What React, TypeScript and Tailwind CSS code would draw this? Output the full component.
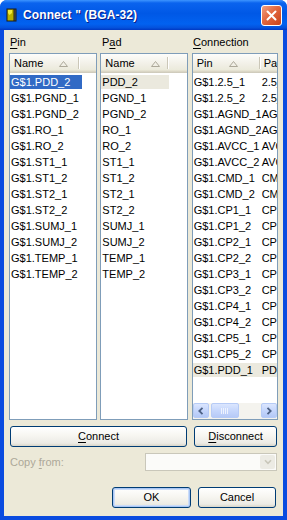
import React from 'react';

const pins = [
  'G$1.PDD_2', 'G$1.PGND_1', 'G$1.PGND_2', 'G$1.RO_1', 'G$1.RO_2', 'G$1.ST1_1', 'G$1.ST1_2',
  'G$1.ST2_1', 'G$1.ST2_2', 'G$1.SUMJ_1', 'G$1.SUMJ_2', 'G$1.TEMP_1', 'G$1.TEMP_2',
];

const pads = [
  'PDD_2', 'PGND_1', 'PGND_2', 'RO_1', 'RO_2', 'ST1_1', 'ST1_2',
  'ST2_1', 'ST2_2', 'SUMJ_1', 'SUMJ_2', 'TEMP_1', 'TEMP_2',
];

const connections: [string, string][] = [
  ['G$1.2.5_1', '2.5_1'], ['G$1.2.5_2', '2.5_2'], ['G$1.AGND_1', 'AGND_1'], ['G$1.AGND_2', 'AGND_2'],
  ['G$1.AVCC_1', 'AVCC_1'], ['G$1.AVCC_2', 'AVCC_2'], ['G$1.CMD_1', 'CMD_1'], ['G$1.CMD_2', 'CMD_2'],
  ['G$1.CP1_1', 'CP1_1'], ['G$1.CP1_2', 'CP1_2'], ['G$1.CP2_1', 'CP2_1'], ['G$1.CP2_2', 'CP2_2'],
  ['G$1.CP3_1', 'CP3_1'], ['G$1.CP3_2', 'CP3_2'], ['G$1.CP4_1', 'CP4_1'], ['G$1.CP4_2', 'CP4_2'],
  ['G$1.CP5_1', 'CP5_1'], ['G$1.CP5_2', 'CP5_2'], ['G$1.PDD_1', 'PDD_1'],
];

function SortArrow() {
  return (
    <svg width="9" height="6" viewBox="0 0 9 6" className="shrink-0">
      <path d="M0.5 5.5 L4.5 0.5 L8.5 5.5 Z" fill="none" stroke="#aca899" strokeWidth="1" />
    </svg>
  );
}

function HeaderCell({ label, width, arrow }: { label: string; width: number; arrow?: boolean }) {
  return (
    <div className="relative flex h-full shrink-0 items-center pl-[4px]" style={{ width }}>
      <span>{label}</span>
      {arrow && (
        <span className="ml-[16px]">
          <SortArrow />
        </span>
      )}
      <div className="absolute right-0 top-[3px] bottom-[4px] w-[2px] border-l border-[#cbc7b8] bg-white" />
    </div>
  );
}

function ListHeader({ children }: { children: React.ReactNode }) {
  return (
    <div className="flex h-[19px] shrink-0 overflow-hidden bg-[linear-gradient(180deg,#fdfdfb_0%,#f0eee4_60%,#ebeadb_84%,#e2decd_88%,#d6d2c2_94%,#cbc7b8_100%)]">
      {children}
    </div>
  );
}

function Mnemonic({ text, index }: { text: string; index: number }) {
  return (
    <>
      {text.slice(0, index)}
      <span className="underline underline-offset-[2px]">{text[index]}</span>
      {text.slice(index + 1)}
    </>
  );
}

function XpButton({ children, width, isDefault }: { children: React.ReactNode; width: number; isDefault?: boolean }) {
  return (
    <div
      className={
        'flex h-[21px] items-center justify-center rounded-[3px] border border-[#003c74] bg-[linear-gradient(180deg,#ffffff_0%,#f7f6f1_45%,#ecebe5_85%,#d8d5c8_100%)] text-black ' +
        (isDefault ? 'shadow-[inset_0_0_0_1px_#a9c6f4,inset_0_0_0_2px_#cbdcf9]' : '')
      }
      style={{ width }}
    >
      {children}
    </div>
  );
}

function ScrollArrow({ dir }: { dir: 'left' | 'right' }) {
  return (
    <div className="flex h-[15px] w-[16px] items-center justify-center rounded-[2px] border border-[#b6cbf6] bg-[linear-gradient(180deg,#dbe6fe_0%,#c5d6fc_50%,#b3c8f6_100%)]">
      <svg width="6" height="8" viewBox="0 0 6 8">
        {dir === 'left' ? (
          <path d="M4.5 0.8 L1.3 4 L4.5 7.2" fill="none" stroke="#4d6185" strokeWidth="1.8" />
        ) : (
          <path d="M1.5 0.8 L4.7 4 L1.5 7.2" fill="none" stroke="#4d6185" strokeWidth="1.8" />
        )}
      </svg>
    </div>
  );
}

export default function App() {
  return (
    <div className="flex h-[520px] w-[287px] flex-col overflow-hidden rounded-t-[7px] bg-[#0a4be0] font-['Liberation_Sans',Arial,sans-serif] text-[11px] text-black">
      {/* Title bar */}
      <div className="flex h-[30px] shrink-0 items-center bg-[linear-gradient(180deg,#3d95ff_0%,#0a63ee_10%,#0058e6_45%,#0262f0_80%,#0452dd_92%,#0038c2_100%)] pl-[6px] pr-[5px]">
        <svg width="11" height="14" viewBox="0 0 11 14" className="shrink-0">
          <rect x="0.5" y="0.5" width="10" height="13" fill="#1a1a1a" />
          <rect x="1.5" y="1.5" width="6" height="11" fill="#b9b200" />
          <path d="M2 2 L6 2 L6 5 L3.5 7 L2 5 Z" fill="#f0ea3c" />
          <rect x="8" y="1.5" width="2" height="11" fill="#3a3a3a" />
        </svg>
        <span className="ml-[6px] text-[12px] font-bold tracking-[0.1px] text-white [text-shadow:1px_1px_0_#0a1c86]">
          Connect " (BGA-32)
        </span>
        <div className="ml-auto flex h-[21px] w-[21px] items-center justify-center rounded-[3px] border border-white bg-[linear-gradient(135deg,#f0a081_0%,#e2673f_45%,#c8421a_100%)]">
          <svg width="11" height="11" viewBox="0 0 11 11">
            <path d="M1.5 1.5 L9.5 9.5 M9.5 1.5 L1.5 9.5" stroke="white" strokeWidth="2" strokeLinecap="round" />
          </svg>
        </div>
      </div>

      {/* Client area */}
      <div className="mx-[4px] mb-[4px] flex flex-1 flex-col bg-[#ece9d8] px-[5px] pt-[6px]">
        <div className="flex h-[13px] items-center">
          <div className="w-[92px] pl-[1px]"><Mnemonic text="Pin" index={0} /></div>
          <div className="w-[92px] pl-[1px]"><Mnemonic text="Pad" index={1} /></div>
          <div><Mnemonic text="Connection" index={0} /></div>
        </div>

        <div className="mt-[4px] flex h-[367px]">
          {/* Pin list */}
          <div className="flex w-[89px] flex-col overflow-hidden border border-[#7f9db9] bg-white">
            <ListHeader>
              <HeaderCell label="Name" width={70} arrow />
            </ListHeader>
            <div className="flex flex-col pt-[1px]">
              {pins.map((p, i) => (
                <div key={p} className="flex h-[16px] items-center">
                  <div
                    className={
                      'flex h-[14px] w-[72px] items-center whitespace-nowrap pl-[1px] ' +
                      (i === 0 ? 'bg-[#316ac5] text-white' : '')
                    }
                  >
                    {p}
                  </div>
                </div>
              ))}
            </div>
          </div>

          {/* Pad list */}
          <div className="ml-[3px] flex w-[88px] flex-col overflow-hidden border border-[#7f9db9] bg-white">
            <ListHeader>
              <HeaderCell label="Name" width={68} arrow />
            </ListHeader>
            <div className="flex flex-col pt-[1px]">
              {pads.map((p, i) => (
                <div key={p} className="flex h-[16px] items-center">
                  <div
                    className={
                      'flex h-[14px] w-[68px] items-center whitespace-nowrap pl-[1px] ' +
                      (i === 0 ? 'bg-[#ebe9de]' : '')
                    }
                  >
                    {p}
                  </div>
                </div>
              ))}
            </div>
          </div>

          {/* Connection list */}
          <div className="ml-[4px] flex w-[87px] flex-col overflow-hidden border border-[#7f9db9] bg-white">
            <ListHeader>
              <HeaderCell label="Pin" width={68} arrow />
              <div className="flex h-full items-center pl-[3px]">Pad</div>
            </ListHeader>
            <div className="flex flex-1 flex-col overflow-hidden pt-[1px]">
              {connections.map(([pin, pad], i) => (
                <div key={pin} className="flex h-[16px] shrink-0 items-center">
                  <div
                    className={
                      'flex h-[14px] w-full items-center whitespace-nowrap ' +
                      (i === connections.length - 1 ? 'bg-[#ebe9de]' : '')
                    }
                  >
                    <span className="w-[68px] shrink-0 overflow-hidden pl-[1px]">{pin}</span>
                    <span className="pl-[1px]">{pad}</span>
                  </div>
                </div>
              ))}
            </div>
            {/* Horizontal scrollbar */}
            <div className="flex h-[16px] shrink-0 items-center bg-[#f4f3ee] pb-[1px]">
              <ScrollArrow dir="left" />
              <div className="ml-[2px] flex h-[15px] w-[28px] items-center justify-center rounded-[2px] border border-[#b6cbf6] bg-[linear-gradient(180deg,#dbe6fe_0%,#c6d7fc_50%,#b6caf7_100%)]">
                <div className="flex gap-[1px]">
                  <div className="h-[6px] w-[1px] bg-[#eef3fe]" />
                  <div className="h-[6px] w-[1px] bg-[#eef3fe]" />
                  <div className="h-[6px] w-[1px] bg-[#eef3fe]" />
                  <div className="h-[6px] w-[1px] bg-[#eef3fe]" />
                </div>
              </div>
              <div className="flex-1" />
              <ScrollArrow dir="right" />
            </div>
          </div>
        </div>

        {/* Connect / Disconnect */}
        <div className="mt-[6px] flex">
          <div className="ml-[1px]">
            <XpButton width={177}><Mnemonic text="Connect" index={0} /></XpButton>
          </div>
          <div className="ml-[7px]">
            <XpButton width={83}><Mnemonic text="Disconnect" index={0} /></XpButton>
          </div>
        </div>

        {/* Copy from */}
        <div className="mt-[6px] flex h-[18px] items-center">
          <span className="ml-[1px] text-[#aca899]"><Mnemonic text="Copy from:" index={5} /></span>
          <div className="ml-auto mr-[1px] flex h-[18px] w-[132px] items-center justify-end border border-[#c9c7ba] bg-[#fbfbf9] pr-[1px]">
            <div className="flex h-[14px] w-[15px] items-center justify-center rounded-[2px] bg-[#ecebe4]">
              <svg width="8" height="6" viewBox="0 0 8 6">
                <path d="M1 1.2 L4 4.4 L7 1.2" fill="none" stroke="#c9c7ba" strokeWidth="1.6" />
              </svg>
            </div>
          </div>
        </div>

        {/* OK / Cancel */}
        <div className="mt-[16px] flex justify-end">
          <XpButton width={79} isDefault>OK</XpButton>
          <div className="ml-[7px] mr-[2px]">
            <XpButton width={78}>Cancel</XpButton>
          </div>
        </div>
      </div>
    </div>
  );
}
